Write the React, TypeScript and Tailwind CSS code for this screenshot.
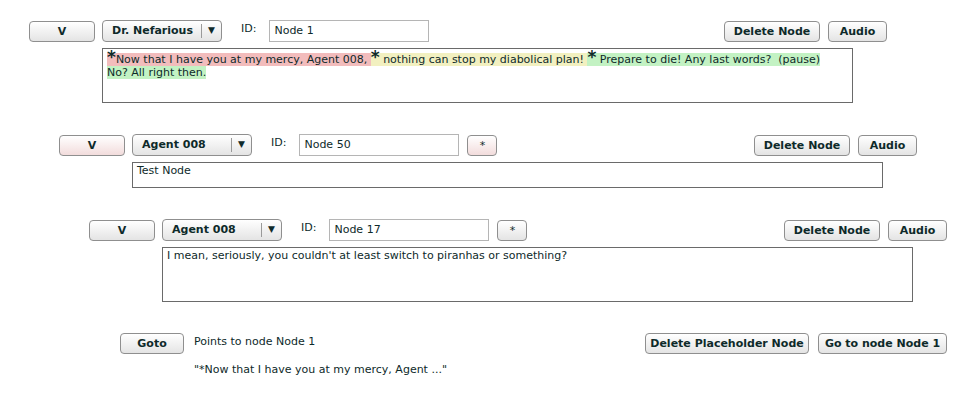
import type { ReactNode } from 'react';

const font = { fontFamily: '"DejaVu Sans", Verdana, sans-serif' };

type BtnProps = { children: ReactNode; w: string; pink?: boolean; className?: string };

function Btn({ children, w, pink, className = '' }: BtnProps) {
  return (
    <button
      className={`${w} h-[21px] shrink-0 rounded-[4px] border border-[#8f8f8f] text-[11px] font-bold text-[#0e2a2a] leading-none ${
        pink ? 'bg-gradient-to-b from-white to-[#f2dcdc]' : 'bg-gradient-to-b from-white to-[#e4e4e4]'
      } ${className}`}
    >
      {children}
    </button>
  );
}

function Dropdown({ label }: { label: string }) {
  return (
    <div className="flex h-[22px] w-[120px] shrink-0 items-center rounded-[4px] border border-[#8f8f8f] bg-gradient-to-b from-white to-[#e4e4e4] text-[11px] font-bold text-[#0e2a2a]">
      <span className="flex-1 pl-[9px]">{label}</span>
      <span className="h-[14px] w-px bg-[#9a9a9a]" />
      <span className="flex w-[19px] justify-center text-[9px]">▼</span>
    </div>
  );
}

type NodeProps = {
  indent: string;
  speaker: string;
  id: string;
  star?: boolean;
  pink?: boolean;
  textH: string;
  children: ReactNode;
};

function DialogNode({ indent, speaker, id, star, pink, textH, children }: NodeProps) {
  return (
    <div className={`${indent} w-[858px]`}>
      <div className="flex h-[22px] items-center">
        <Btn w="w-[66px]" pink={pink}>V</Btn>
        <div className="ml-[7px]">
          <Dropdown label={speaker} />
        </div>
        <span className="ml-[19px] mb-[3px] text-[11px] text-[#0e2a2a]">ID:</span>
        <div className="ml-[13px] flex h-[22px] w-[160px] items-center border border-[#b5b5b5] bg-white pl-[4px] text-[11px] text-[#0e2a2a]">
          {id}
        </div>
        {star && (
          <Btn w="w-[30px]" pink={pink} className="ml-[8px] font-normal">*</Btn>
        )}
        <div className="flex-1" />
        <Btn w="w-[96px]">Delete Node</Btn>
        <Btn w="w-[59px]" className="ml-[8px]">Audio</Btn>
      </div>
      <div
        className={`ml-[73px] mt-[6px] ${textH} w-[751px] border border-[#6a6a6a] bg-white pl-[4px] pr-[14px] text-[11px] leading-[13px] text-[#0e2a2a]`}
      >
        {children}
      </div>
    </div>
  );
}

function Star() {
  return <span className="text-[17px] font-bold leading-[17px]">*</span>;
}

export default function App() {
  return (
    <div className="h-[397px] w-[965px] overflow-hidden bg-white pt-[20px]" style={font}>
      <DialogNode indent="ml-[29px]" speaker="Dr. Nefarious" id="Node 1" textH="h-[55px]">
        <span className="bg-[#f2bcbc]">
          <Star />
          Now that I have you at my mercy, Agent 008,{' '}
        </span>
        <span className="bg-[#f2f0c0]">
          <Star /> nothing can stop my diabolical plan!{' '}
        </span>
        <span className="bg-[#c3f2c3]">
          <Star /> Prepare to die! Any last words?&nbsp; (pause) No? All right then.
        </span>
      </DialogNode>

      <div className="mt-[31px]">
        <DialogNode indent="ml-[59px]" speaker="Agent 008" id="Node 50" star pink textH="h-[26px]">
          <div className="pt-[1px]">Test Node</div>
        </DialogNode>
      </div>

      <div className="mt-[31px]">
        <DialogNode indent="ml-[89px]" speaker="Agent 008" id="Node 17" star textH="h-[55px]">
          <div className="pt-[1px]">
            I mean, seriously, you couldn't at least switch to piranhas or something?
          </div>
        </DialogNode>
      </div>

      <div className="ml-[120px] mt-[31px] flex w-[827px] items-start">
        <Btn w="w-[64px]">Goto</Btn>
        <div className="ml-[10px] pt-[1px] text-[11px] text-[#0e2a2a]">
          <div>Points to node Node 1</div>
          <div className="mt-[11px]">"*Now that I have you at my mercy, Agent ..."</div>
        </div>
        <div className="flex-1" />
        <Btn w="w-[164px]">Delete Placeholder Node</Btn>
        <Btn w="w-[129px]" className="ml-[9px]">Go to node Node 1</Btn>
      </div>
    </div>
  );
}
